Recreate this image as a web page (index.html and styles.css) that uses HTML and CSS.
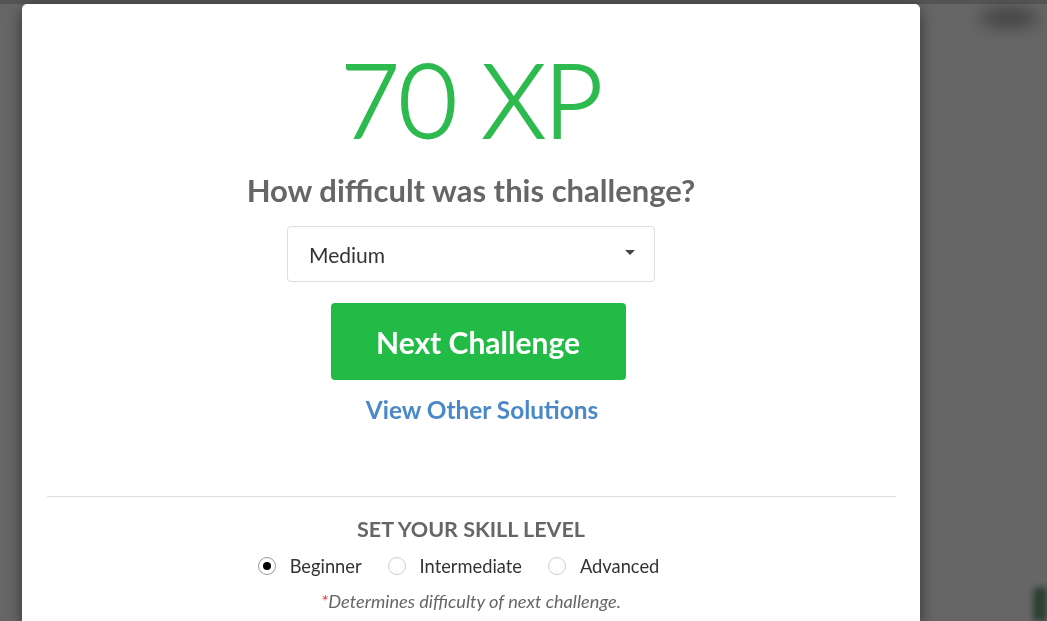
FILE: index.html
```html
<!DOCTYPE html>
<html lang="en">
<head>
<meta charset="utf-8">
<title>Challenge complete</title>
<link rel="stylesheet" href="styles.css">
</head>
<body>
<div class="page">
  <div class="page-top"></div>
  <div class="page-blob"></div>
  <div class="page-btn"></div>
</div>
<div class="backdrop"></div>
<div class="modal">
  <div class="xp">70 XP</div>
  <h2 class="question">How difficult was this challenge?</h2>
  <div class="select">
    <span class="select-value">Medium</span>
    <span class="caret"></span>
  </div>
  <button class="next-btn" type="button">Next Challenge</button>
  <a class="other-link" href="#">View Other Solutions</a>
  <hr class="divider">
  <div class="skill-title">SET YOUR SKILL LEVEL</div>
  <div class="skill-options">
    <label class="option"><span class="radio checked"></span>Beginner</label>
    <label class="option"><span class="radio"></span>Intermediate</label>
    <label class="option"><span class="radio"></span>Advanced</label>
  </div>
  <div class="note"><span class="req">*</span>Determines difficulty of next challenge.</div>
</div>
</body>
</html>
```

FILE: styles.css
```css
html, body {
  margin: 0;
  padding: 0;
  width: 100%;
  height: 100%;
  overflow: hidden;
}
body {
  background: #ffffff;
  font-family: Lato, "Open Sans", sans-serif;
}
.page {
  position: relative;
  height: 100%;
  overflow: hidden;
}
.page-top {
  height: 4px;
  background: #d2d2d2;
}
.page-blob {
  position: absolute;
  right: 8px;
  top: 8px;
  width: 60px;
  height: 20px;
  border-radius: 50%;
  background: #a8a8a8;
  filter: blur(8px);
}
.page-btn {
  position: absolute;
  right: 0;
  bottom: 0;
  width: 14px;
  height: 34px;
  border-radius: 6px 0 0 0;
  background: #6f9f7c;
  filter: blur(3px);
}
.backdrop {
  position: fixed;
  inset: 0;
  background: rgba(0, 0, 0, 0.6);
}
.modal {
  position: absolute;
  left: 22px;
  top: 4px;
  bottom: 0;
  width: 898px;
  overflow: hidden;
  background: #ffffff;
  border-radius: 5px 5px 0 0;
  box-shadow: 0 5px 15px rgba(0, 0, 0, 0.5);
  display: flex;
  flex-direction: column;
  align-items: center;
  padding-top: 44px;
  box-sizing: border-box;
}
.xp {
  font-weight: 300;
  font-size: 102px;
  line-height: 102px;
  color: #2dba4e;
  -webkit-text-stroke: 1.8px #2dba4e;
  letter-spacing: -1.5px;
}
.question {
  margin: 21px 0 0;
  font-size: 31px;
  line-height: 38px;
  font-weight: 700;
  color: #666666;
}
.select {
  margin-top: 17px;
  width: 368px;
  height: 56px;
  flex-shrink: 0;
  box-sizing: border-box;
  border: 1px solid #dddddd;
  border-radius: 4px;
  display: flex;
  align-items: center;
  justify-content: space-between;
  padding: 0 19px 0 21px;
}
.select-value {
  font-size: 21px;
  color: #333333;
}
.caret {
  width: 0;
  height: 0;
  border-left: 5px solid transparent;
  border-right: 5px solid transparent;
  border-top: 5px solid #444444;
  margin-top: -3px;
}
.next-btn {
  margin: 21px 0 0 14px;
  width: 295px;
  height: 77px;
  flex-shrink: 0;
  border: none;
  border-radius: 4px;
  background: #22bb45;
  color: #ffffff;
  font-family: Lato, "Open Sans", sans-serif;
  font-weight: 700;
  font-size: 30px;
  padding: 0;
}
.other-link {
  margin: 16px 0 0 22px;
  font-size: 24.4px;
  line-height: 28px;
  font-weight: 700;
  color: #4a88c7;
  text-decoration: none;
}
.divider {
  margin: 72px 0 0;
  width: 849px;
  border: none;
  border-top: 1px solid #dddddd;
  height: 0;
}
.skill-title {
  margin-top: 19px;
  font-size: 21.5px;
  line-height: 26px;
  font-weight: 700;
  color: #666666;
}
.skill-options {
  margin: 13px 25px 0 0;
  display: flex;
  gap: 26px;
  height: 22px;
  align-items: center;
}
.option {
  display: flex;
  align-items: center;
  gap: 14px;
  font-size: 18.3px;
  color: #333333;
}
.radio {
  width: 18px;
  height: 18px;
  box-sizing: border-box;
  border-radius: 50%;
  border: 1px solid #cccccc;
  display: flex;
  align-items: center;
  justify-content: center;
}
.radio.checked {
  border-color: #999999;
}
.radio.checked::after {
  content: "";
  width: 8px;
  height: 8px;
  border-radius: 50%;
  background: #000000;
}
.note {
  margin-top: 13px;
  font-size: 18.2px;
  line-height: 22px;
  font-style: italic;
  color: #666666;
}
.req {
  color: #e0393e;
}
```
